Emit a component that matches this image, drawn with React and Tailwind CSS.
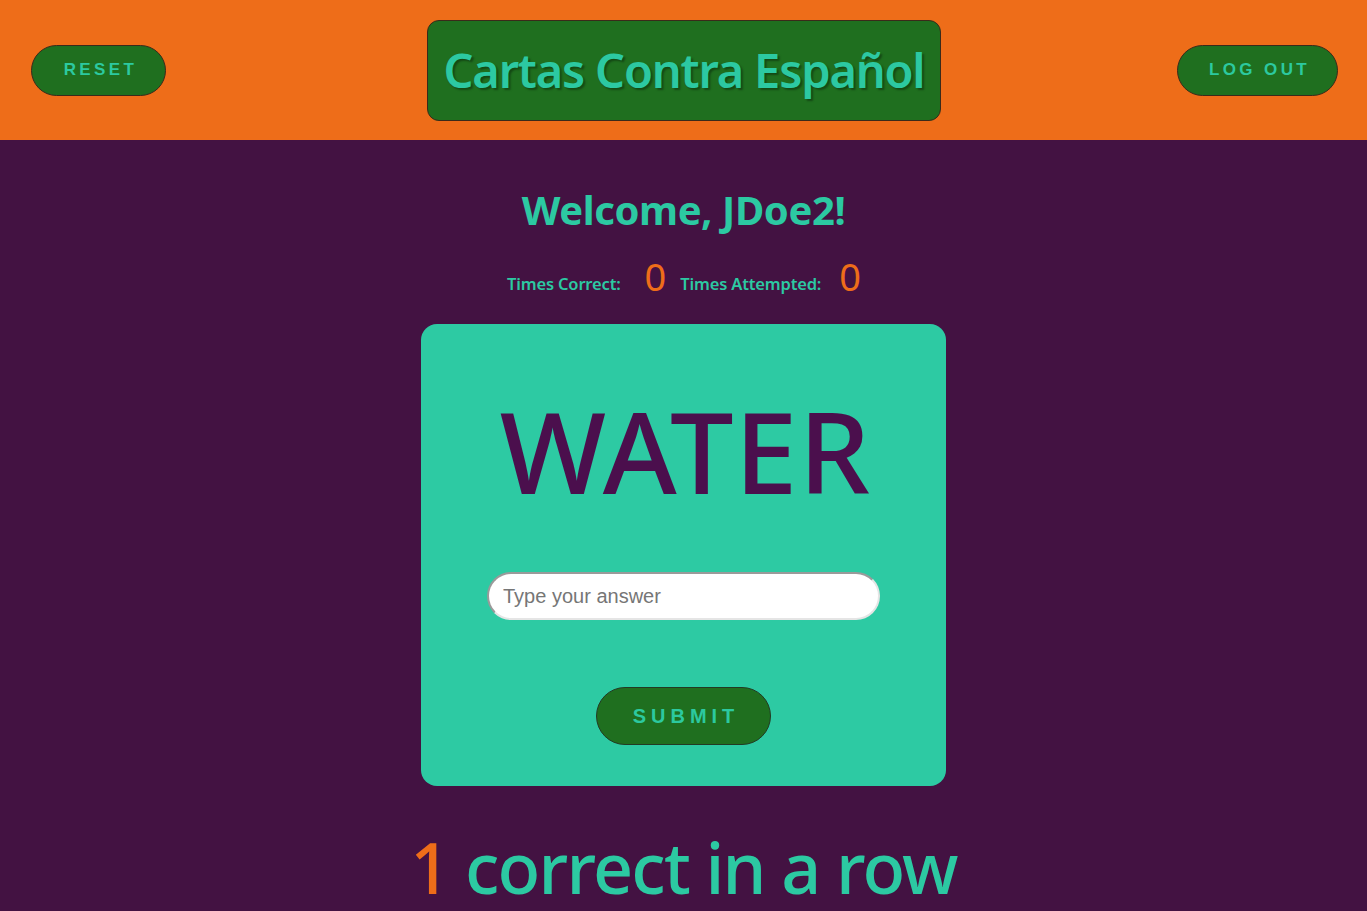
export default function App() {
  const sans = { fontFamily: '"Noto Sans", "Open Sans", sans-serif' };
  const arial = { fontFamily: '"Liberation Sans", Arial, sans-serif' };
  return (
    <div className="min-h-[911px] w-full bg-[#431242] flex flex-col">
      <header className="h-[140px] bg-[#ee6d19] flex items-center justify-between px-[31px]">
        <button
          style={arial}
          className="w-[135px] h-[51px] rounded-full bg-[#1f6f1f] border border-[#3a2a1a] text-[#2cc99f] font-bold text-[17px] tracking-[0.2em] pl-[4px]"
        >
          RESET
        </button>
        <div className="w-[514px] h-[101px] ml-[25px] rounded-[12px] bg-[#1f6f1f] border border-[#3a2a1a] flex items-center justify-center">
          <h1
            style={{ ...sans, textShadow: '2px 2px 2px rgba(0,0,0,0.35)' }}
            className="text-[#2cc9a2] font-semibold text-[47px] tracking-[-0.025em]"
          >
            Cartas Contra Español
          </h1>
        </div>
        <button
          style={arial}
          className="w-[161px] h-[51px] mr-[-2px] rounded-full bg-[#1f6f1f] border border-[#3a2a1a] text-[#2cc99f] font-bold text-[17px] tracking-[0.2em] pl-[4px]"
        >
          LOG OUT
        </button>
      </header>

      <main className="flex flex-col items-center">
        <h2 style={sans} className="mt-[40px] text-[#2cc9a2] font-bold text-[40px] leading-[60px] tracking-[-0.01em]">
          Welcome, JDoe2!
        </h2>
        <div style={sans} className="mt-[14px] flex items-end h-[44px] ml-[1px]">
          <span className="text-[#2cc9a2] text-[16.5px] font-semibold mb-[1px] tracking-[-0.01em]">Times Correct:</span>
          <span className="text-[#ee6d19] text-[38px] leading-[44px] ml-[24px] mr-[14px]">0</span>
          <span className="text-[#2cc9a2] text-[16.5px] font-semibold mb-[1px] tracking-[-0.01em]">Times Attempted:</span>
          <span className="text-[#ee6d19] text-[38px] leading-[44px] ml-[18px]">0</span>
        </div>

        <div className="mt-[26px] w-[525px] h-[462px] rounded-[16px] bg-[#2dcaa3] flex flex-col items-center">
          <div
            style={sans}
            className="mt-[61px] text-[#4b0f4d] font-medium text-[113px] leading-[130px] tracking-[0.01em] pl-[4px]"
          >
            WATER
          </div>
          <input
            style={arial}
            placeholder="Type your answer"
            className="mt-[57px] w-[393px] h-[48px] rounded-full bg-white border-2 border-t-[#9a9a9a] border-l-[#9a9a9a] border-r-[#e5e5e5] border-b-[#e5e5e5] px-[14px] text-[20px] text-[#333] placeholder:text-[#767676] outline-none"
          />
          <button
            style={arial}
            className="mt-[67px] w-[175px] h-[58px] rounded-full bg-[#1f6f1f] border border-[#233a23] text-[#2cc99f] font-bold text-[20px] tracking-[0.25em] pl-[5px]"
          >
            SUBMIT
          </button>
        </div>

        <div style={sans} className="mt-[36px] font-medium text-[70px] leading-[90px] tracking-[-0.025em]">
          <span className="text-[#ee6d19]">1</span>
          <span className="text-[#2cc9a2]"> correct in a row</span>
        </div>
      </main>
    </div>
  );
}
